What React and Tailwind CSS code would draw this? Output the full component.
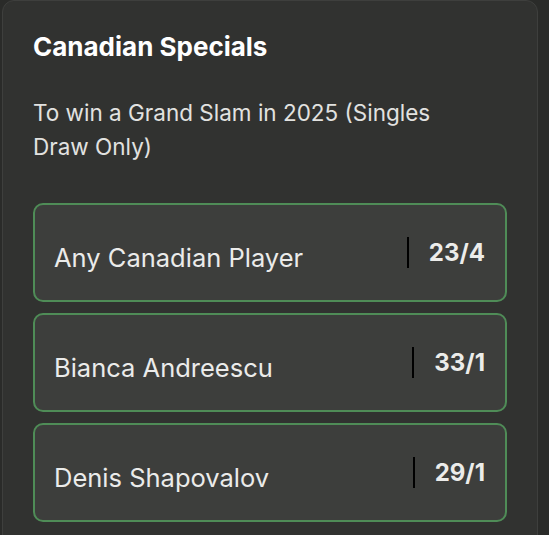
import React from 'react'

const ROWS = [
  { name: 'Any Canadian Player', odds: '23/4' },
  { name: 'Bianca Andreescu', odds: '33/1' },
  { name: 'Denis Shapovalov', odds: '29/1' },
]

export default function App() {
  return (
    <div className="w-[549px] h-[535px] overflow-hidden bg-[#2a2b29] pl-[2px] pr-[11px]" style={{ fontFamily: 'Inter, "Noto Sans", sans-serif' }}>
      <div className="h-[560px] rounded-t-[12px] border border-[#3e3f3d] bg-[#313230] px-[30px] pt-[31px]">
        <h2 className="text-[26px] leading-[30px] font-bold text-white">Canadian Specials</h2>
        <p className="mt-[34px] pr-[40px] text-[22.5px] leading-[34px] text-[#e2e2e0]">
          To win a Grand Slam in 2025 (Singles Draw Only)
        </p>
        <div className="mt-[39px] flex flex-col gap-[11px]">
          {ROWS.map(r => (
            <div key={r.name}
              className="h-[99px] rounded-[10px] border-2 border-[#4f8c57] bg-[#3d3e3c] flex items-center pl-[19px] pr-[20px]">
              <span className="flex-1 pt-[11px] text-[25.5px] text-[#ebebea]">{r.name}</span>
              <span className="w-[2px] h-[31px] bg-black mr-[20px]" />
              <span className="text-[24px] font-bold text-[#ececea]">{r.odds}</span>
            </div>
          ))}
        </div>
      </div>
    </div>
  )
}
